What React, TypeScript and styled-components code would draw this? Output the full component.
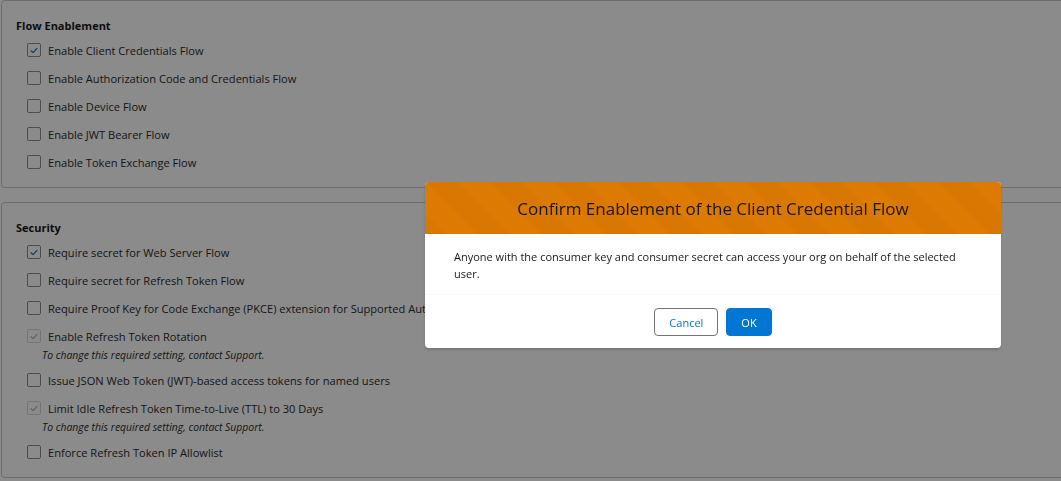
import React from "react";
import styled, { createGlobalStyle } from "styled-components";

const GlobalStyle = createGlobalStyle`
  html, body {
    margin: 0;
    padding: 0;
    background: #ffffff;
    overflow: hidden;
  }
  body {
    font-family: "Open Sans", "Noto Sans", Arial, sans-serif;
    color: #2b2b2b;
  }
`;

const Page = styled.div`
  display: flex;
  flex-direction: column;
  gap: 14px;
  padding-left: 1px;
  margin-right: -20px;
`;

const Card = styled.section`
  border: 1px solid #c9c9c9;
  border-radius: 4px;
  padding: 15px 14px 11px 14px;
  background: #ffffff;
`;

const CardTitle = styled.h3`
  margin: 0;
  font-size: 11px;
  font-weight: 700;
  line-height: 19px;
  padding-bottom: 1px;
  color: #181818;
`;

const Row = styled.label`
  display: flex;
  align-items: center;
  height: 28px;
  padding-left: 11px;
  gap: 7px;
  font-size: 11.1px;
  color: #2b2b2b;
  white-space: nowrap;
`;

const Box = styled.span<{ $disabled?: boolean }>`
  width: 12px;
  height: 12px;
  flex: none;
  border: 1px solid ${(p) => (p.$disabled ? "#d6d6d6" : "#8c8c8c")};
  border-radius: 2px;
  background: #ffffff;
  display: flex;
  align-items: center;
  justify-content: center;
`;

const Help = styled.div`
  margin: -2px 0 4px 26px;
  line-height: 14px;
  font-size: 10.4px;
  font-style: italic;
  color: #2b2b2b;
`;

const Backdrop = styled.div`
  position: fixed;
  inset: 0;
  background: rgba(0, 0, 0, 0.455);
`;

const Modal = styled.div`
  position: fixed;
  left: 425px;
  top: 182px;
  width: 576px;
  border-radius: 4px;
  background: #ffffff;
  box-shadow: 0 2px 3px rgba(0, 0, 0, 0.16);
  overflow: hidden;
`;

const ModalHeader = styled.header`
  height: 52px;
  display: flex;
  align-items: center;
  justify-content: center;
  background-color: #dd7a01;
  background-image: linear-gradient(
    45deg,
    rgba(0, 0, 0, 0.025) 25%,
    transparent 25%,
    transparent 50%,
    rgba(0, 0, 0, 0.025) 50%,
    rgba(0, 0, 0, 0.025) 75%,
    transparent 75%,
    transparent
  );
  background-size: 64px 64px;
`;

const ModalTitle = styled.h2`
  margin: 0;
  font-size: 17px;
  font-weight: 400;
  color: #181818;
`;

const ModalBody = styled.div`
  padding: 14px 29px 12px 29px;
  font-size: 11px;
  line-height: 17px;
  color: #181818;
`;

const ModalFooter = styled.footer`
  display: flex;
  justify-content: center;
  gap: 8px;
  padding: 13px 16px 12px;
  border-top: 1px solid #fafafa;
`;

const Button = styled.button<{ $brand?: boolean }>`
  height: 28px;
  padding: 0 14px;
  border-radius: 4px;
  font-family: inherit;
  font-size: 11px;
  border: 1px solid ${(p) => (p.$brand ? "#0176d3" : "#747474")};
  background: ${(p) => (p.$brand ? "#0176d3" : "#ffffff")};
  color: ${(p) => (p.$brand ? "#ffffff" : "#0176d3")};
  cursor: pointer;
`;

function Check({ checked, disabled }: { checked?: boolean; disabled?: boolean }) {
  return (
    <Box $disabled={disabled}>
      {checked && (
        <svg width="12" height="12" viewBox="0 0 12 12">
          <path
            d="M3 6.8 L5 8.6 L9 4.4"
            fill="none"
            stroke={disabled ? "#b0b0b0" : "#0176d3"}
            strokeWidth="1.2"
            strokeLinecap="round"
            strokeLinejoin="round"
          />
        </svg>
      )}
    </Box>
  );
}

interface Item {
  label: string;
  checked?: boolean;
  disabled?: boolean;
  help?: string;
}

const required = "To change this required setting, contact Support.";

const flowItems: Item[] = [
  { label: "Enable Client Credentials Flow", checked: true },
  { label: "Enable Authorization Code and Credentials Flow" },
  { label: "Enable Device Flow" },
  { label: "Enable JWT Bearer Flow" },
  { label: "Enable Token Exchange Flow" },
];

const securityItems: Item[] = [
  { label: "Require secret for Web Server Flow", checked: true },
  { label: "Require secret for Refresh Token Flow" },
  { label: "Require Proof Key for Code Exchange (PKCE) extension for Supported Authorization Flows" },
  { label: "Enable Refresh Token Rotation", checked: true, disabled: true, help: required },
  { label: "Issue JSON Web Token (JWT)-based access tokens for named users" },
  { label: "Limit Idle Refresh Token Time-to-Live (TTL) to 30 Days", checked: true, disabled: true, help: required },
  { label: "Enforce Refresh Token IP Allowlist" },
];

function Section({ title, items }: { title: string; items: Item[] }) {
  return (
    <Card>
      <CardTitle>{title}</CardTitle>
      {items.map((it, i) => (
        <div key={i}>
          <Row>
            <Check checked={it.checked} disabled={it.disabled} />
            {it.label}
          </Row>
          {it.help && <Help>{it.help}</Help>}
        </div>
      ))}
    </Card>
  );
}

export default function App() {
  return (
    <>
      <GlobalStyle />
      <Page>
        <Section title="Flow Enablement" items={flowItems} />
        <Section title="Security" items={securityItems} />
      </Page>
      <Backdrop />
      <Modal>
        <ModalHeader>
          <ModalTitle>Confirm Enablement of the Client Credential Flow</ModalTitle>
        </ModalHeader>
        <ModalBody>
          Anyone with the consumer key and consumer secret can access your org on behalf of the selected user.
        </ModalBody>
        <ModalFooter>
          <Button>Cancel</Button>
          <Button $brand>OK</Button>
        </ModalFooter>
      </Modal>
    </>
  );
}
